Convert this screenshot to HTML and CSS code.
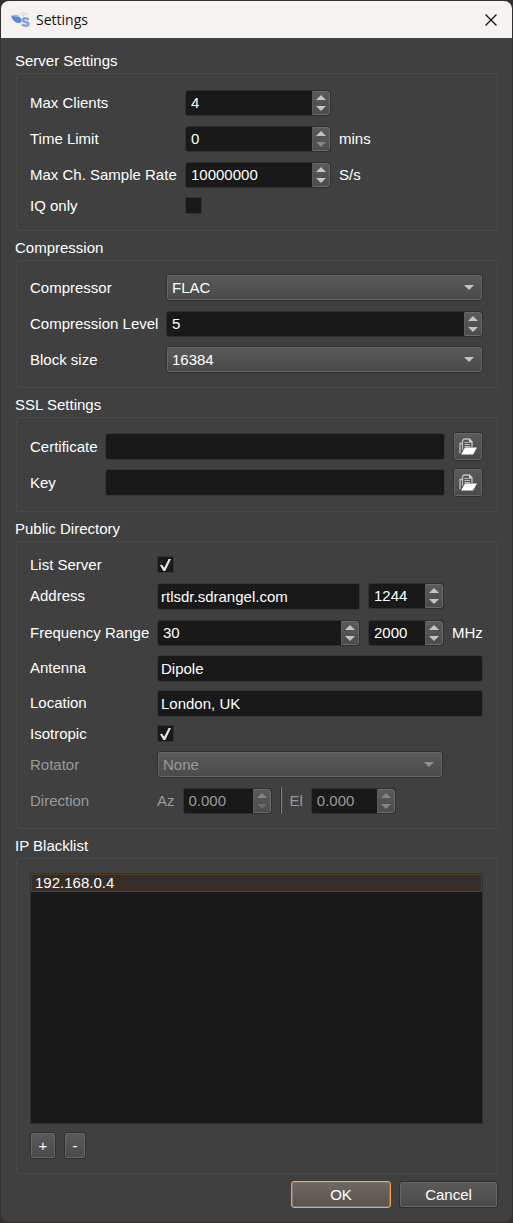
FILE: index.html
```html
<!DOCTYPE html>
<html lang="en">
<head>
<meta charset="utf-8">
<meta name="viewport" content="width=device-width, initial-scale=1">
<title>Settings</title>
<link rel="stylesheet" href="styles.css">
</head>
<body>
<main class="dialog">
  <header class="titlebar">
    <svg class="titlebar__logo" viewBox="0 0 22 18" aria-hidden="true">
      <path d="M1 5.500Q4 3.500 8 4.500L11.500 8V11Q9 12.500 6 11.500Q2.500 9.500 1 5.500Z" fill="#5b88d0"/>
      <path d="M1 5Q4 3 8 4L10 6.500Q5 5 1 5Z" fill="#9dbbe6"/>
      <path d="M9.500 4Q10 2 14 2.200Q18 2.500 17.500 4.500M11 5Q12.500 3.500 15 4.500" fill="none" stroke="#c9d6ea" stroke-width="1"/>
      <path d="M18.700 8.500Q17 7.200 15.200 7.200Q13 7.200 13 8.900Q13 10.400 15.700 10.900Q18.500 11.400 18.500 13Q18.500 14.800 15.700 14.800Q13.500 14.800 12 13.600" fill="none" stroke="#7da2dc" stroke-width="2.500"/>
    </svg>
    <h1 class="titlebar__text">Settings</h1>
    <button class="titlebar__close" type="button" aria-label="Close">
      <svg viewBox="0 0 12 12" aria-hidden="true"><path d="M0.500 0.500L11.500 11.500M11.500 0.500L0.500 11.500" stroke="#111" stroke-width="1.300"/></svg>
    </button>
  </header>

  <form class="content">
    <section class="group">
      <h2 class="group__title">Server Settings</h2>
      <div class="group__box group__box--roomy grid grid--server">
        <label for="clients">Max Clients</label>
        <div class="spin">
          <input id="clients" type="text" value="4">
          <span class="spin__steps"><button class="step step--up" type="button" aria-label="More clients"></button><button class="step step--down" type="button" aria-label="Fewer clients"></button></span>
        </div>
        <span></span>
        <label for="limit">Time Limit</label>
        <div class="spin">
          <input id="limit" type="text" value="0">
          <span class="spin__steps"><button class="step step--up" type="button" aria-label="Raise limit"></button><button class="step step--down" type="button" aria-label="Lower limit" disabled></button></span>
        </div>
        <span>mins</span>
        <label for="rate">Max Ch. Sample Rate</label>
        <div class="spin">
          <input id="rate" type="text" value="10000000">
          <span class="spin__steps"><button class="step step--up" type="button" aria-label="Raise rate"></button><button class="step step--down" type="button" aria-label="Lower rate"></button></span>
        </div>
        <span>S/s</span>
        <label for="iq">IQ only</label>
        <input class="check" id="iq" type="checkbox">
      </div>
    </section>

    <section class="group">
      <h2 class="group__title">Compression</h2>
      <div class="group__box group__box--snug grid grid--compression">
        <label for="compressor">Compressor</label>
        <div class="combo"><select id="compressor"><option>FLAC</option></select></div>
        <label for="level">Compression Level</label>
        <div class="spin">
          <input id="level" type="text" value="5">
          <span class="spin__steps"><button class="step step--up" type="button" aria-label="Raise level"></button><button class="step step--down" type="button" aria-label="Lower level"></button></span>
        </div>
        <label for="block">Block size</label>
        <div class="combo"><select id="block"><option>16384</option></select></div>
      </div>
    </section>

    <section class="group">
      <h2 class="group__title">SSL Settings</h2>
      <div class="group__box grid grid--ssl">
        <label for="cert">Certificate</label>
        <input class="text" id="cert" type="text">
        <button class="button button--icon" type="button" aria-label="Browse for certificate">
          <svg viewBox="0 0 18 18" aria-hidden="true"><path d="M1 15V5.500H3.500V2.500L5 1H10.500L13 3.500V9" fill="none" stroke="#bdbdbd" stroke-width="1.400"/><path d="M3.500 5V12M5.500 4.500H9.500M5.500 6.500H11M5.500 8.500H11" fill="none" stroke="#bdbdbd" stroke-width="1.200"/><path d="M10 1L13.500 4.500H10Z" fill="#e0e0e0"/><path d="M6 9.500H18L14 16.500H2Z" fill="#fff"/></svg>
        </button>
        <label for="key">Key</label>
        <input class="text" id="key" type="text">
        <button class="button button--icon" type="button" aria-label="Browse for key">
          <svg viewBox="0 0 18 18" aria-hidden="true"><path d="M1 15V5.500H3.500V2.500L5 1H10.500L13 3.500V9" fill="none" stroke="#bdbdbd" stroke-width="1.400"/><path d="M3.500 5V12M5.500 4.500H9.500M5.500 6.500H11M5.500 8.500H11" fill="none" stroke="#bdbdbd" stroke-width="1.200"/><path d="M10 1L13.500 4.500H10Z" fill="#e0e0e0"/><path d="M6 9.500H18L14 16.500H2Z" fill="#fff"/></svg>
        </button>
      </div>
    </section>

    <section class="group">
      <h2 class="group__title">Public Directory</h2>
      <div class="group__box grid grid--directory">
        <label for="list">List Server</label>
        <input class="check" id="list" type="checkbox" checked>
        <label for="address">Address</label>
        <div class="pair">
          <input class="text" id="address" type="text" value="rtlsdr.sdrangel.com">
          <div class="spin">
            <input type="text" value="1244" aria-label="Port">
            <span class="spin__steps"><button class="step step--up" type="button" aria-label="Raise port"></button><button class="step step--down" type="button" aria-label="Lower port"></button></span>
          </div>
        </div>
        <label for="freq">Frequency Range</label>
        <div class="pair">
          <div class="spin">
            <input id="freq" type="text" value="30">
            <span class="spin__steps"><button class="step step--up" type="button" aria-label="Raise minimum"></button><button class="step step--down" type="button" aria-label="Lower minimum"></button></span>
          </div>
          <div class="spin">
            <input type="text" value="2000" aria-label="Maximum frequency">
            <span class="spin__steps"><button class="step step--up" type="button" aria-label="Raise maximum"></button><button class="step step--down" type="button" aria-label="Lower maximum"></button></span>
          </div>
          <span>MHz</span>
        </div>
        <label for="antenna">Antenna</label>
        <input class="text" id="antenna" type="text" value="Dipole">
        <label for="location">Location</label>
        <input class="text" id="location" type="text" value="London, UK">
        <label for="iso">Isotropic</label>
        <input class="check" id="iso" type="checkbox" checked>
        <label class="is-off" for="rotator">Rotator</label>
        <div class="combo combo--rotator is-off"><select id="rotator" disabled><option>None</option></select></div>
        <span class="is-off">Direction</span>
        <div class="direction is-off">
          <label for="az">Az</label>
          <div class="spin spin--az">
            <input id="az" type="text" value="0.000" disabled>
            <span class="spin__steps"><button class="step step--up" type="button" aria-label="Raise azimuth" disabled></button><button class="step step--down step--min" type="button" aria-label="Lower azimuth" disabled></button></span>
          </div>
          <span class="direction__line"></span>
          <label for="el">El</label>
          <div class="spin spin--el">
            <input id="el" type="text" value="0.000" disabled>
            <span class="spin__steps"><button class="step step--up" type="button" aria-label="Raise elevation" disabled></button><button class="step step--down" type="button" aria-label="Lower elevation" disabled></button></span>
          </div>
        </div>
      </div>
    </section>

    <section class="group">
      <h2 class="group__title">IP Blacklist</h2>
      <div class="group__box">
        <ul class="list">
          <li class="list__item">192.168.0.4</li>
        </ul>
        <div class="list-actions">
          <button class="button button--add" type="button">+</button>
          <button class="button button--remove" type="button">-</button>
        </div>
      </div>
    </section>

    <footer class="actions">
      <button class="button button--default" type="button">OK</button>
      <button class="button" type="button">Cancel</button>
    </footer>
  </form>
</main>
</body>
</html>
```

FILE: styles.css
```css
* {
  box-sizing: border-box;
}

body {
  margin: 0;
  padding: 1px;
  background: #34302e;
  color: #fff;
  font: 15px/18px "Liberation Sans", Arial, sans-serif;
}

input,
select,
button {
  margin: 0;
  padding: 0;
  border: 0;
  background: none;
  color: inherit;
  font: inherit;
}

label {
  white-space: nowrap;
}

.dialog {
  overflow: hidden;
  border-radius: 8px;
  background: #404040;
}

.titlebar {
  display: flex;
  align-items: center;
  height: 37px;
  padding: 0 15px 0 9px;
  background: #f6f2f0;
  color: #111;
}

.titlebar__logo {
  width: 22px;
  height: 18px;
}

.titlebar__text {
  flex: 1;
  margin: 0 0 0 4px;
  font: 14px/20px "Open Sans", "Noto Sans", sans-serif;
}

.titlebar__close {
  display: flex;
  width: 12px;
  height: 12px;
}

.titlebar__close svg {
  width: 12px;
  height: 12px;
}

.content {
  padding: 6px 14px 14px;
}

.group__title {
  margin: 0;
  padding: 8px 0 3px;
  font-size: 15px;
  font-weight: 400;
  line-height: 18px;
}

.group__box {
  margin-left: 1px;
  padding: 14px 14px 14px 13px;
  border: 1px solid #4a4a4a;
  border-radius: 3px;
}

.group__box--roomy {
  padding-top: 15px;
  padding-bottom: 16px;
}

.group__box--snug {
  padding-top: 13px;
}

.grid {
  display: grid;
  align-items: center;
  gap: 9px 8px;
}

.grid--server {
  grid-template-columns: 147px 146px 1fr;
  grid-template-rows: repeat(3, 27px) 17px;
}

.grid--compression {
  grid-template-columns: 128px 1fr;
  grid-auto-rows: 27px;
}

.grid--ssl {
  grid-template-columns: 67px 1fr 30px;
  grid-auto-rows: 29px;
  row-gap: 7px;
}

.grid--directory {
  grid-template-columns: 119px 1fr;
  grid-template-rows: 17px 28px 27px 26px 26px 17px 27px 27px;
}

.text {
  width: 100%;
  min-width: 0;
  height: 27px;
  padding: 0 3px;
  border: 1px solid #363636;
  border-radius: 3px;
  background: #191919;
}

.spin {
  display: flex;
  height: 26px;
  min-width: 0;
  overflow: hidden;
  border: 1px solid #303030;
  border-radius: 3px;
  background: #191919;
}

.spin input {
  flex: 1;
  width: 0;
  min-width: 0;
  padding-left: 5px;
}

.spin__steps {
  display: flex;
  flex-direction: column;
  width: 18px;
  border: 1px solid #6a6a6a;
  border-left-color: #5c5c5c;
  border-radius: 0 2px 2px 0;
  background: linear-gradient(#5a5a5a, #4c4c4c);
}

.step {
  display: flex;
  flex: 1;
  align-items: center;
  justify-content: center;
  color: #c4c4c4;
}

.step::before {
  content: "";
  border: 5px solid transparent;
}

.step--up::before {
  border-top: 0;
  border-bottom-color: currentColor;
}

.step--down::before {
  border-bottom: 0;
  border-top-color: currentColor;
}

.step:disabled {
  color: #858585;
}

.step--min:disabled {
  color: #696969;
}

.combo {
  position: relative;
  height: 27px;
}

.combo select {
  width: 100%;
  height: 27px;
  padding: 0 24px 0 5px;
  border: 1px solid #303030;
  border-radius: 3px;
  background: linear-gradient(#5a5a5a, #4a4a4a);
  box-shadow: inset 0 0 0 1px #666;
  appearance: none;
  opacity: 1;
}

.combo::after {
  content: "";
  position: absolute;
  top: 11px;
  right: 9px;
  border: 5px solid transparent;
  border-top-color: #c4c4c4;
  border-bottom: 0;
  pointer-events: none;
}

.combo.is-off::after {
  border-top-color: #909090;
}

.combo--rotator {
  margin-right: 40px;
}

.is-off {
  color: #9a9a9a;
}

.check {
  display: block;
  width: 17px;
  height: 17px;
  border: 1px solid #333;
  background: #191919;
  appearance: none;
}

.check:checked::before {
  content: "";
  display: block;
  width: 11px;
  height: 12px;
  margin: 2px;
  background: #e6e6e6;
  clip-path: polygon(0 52%, 17% 45%, 39% 72%, 78% 0, 100% 0, 48% 100%, 31% 100%);
}

.pair {
  display: grid;
  grid-template-columns: 1fr 76px 31px;
  align-items: center;
  gap: 8px;
}

.direction {
  display: flex;
  align-items: center;
  gap: 8px;
}

.spin--az {
  width: 89px;
}

.spin--el {
  width: 85px;
}

.direction__line {
  width: 2px;
  height: 27px;
  border-left: 1px solid #2b2b2b;
  background: #888;
}

.button {
  height: 27px;
  border: 1px solid #303030;
  border-radius: 3px;
  background: linear-gradient(#5a5a5a, #4a4a4a);
  box-shadow: inset 0 0 0 1px #666;
}

.button--icon {
  display: flex;
  align-items: center;
  justify-content: center;
  height: 29px;
}

.button--icon svg {
  width: 18px;
  height: 18px;
}

.list {
  height: 251px;
  margin: 0;
  padding: 0;
  border: 1px solid #303030;
  background: #191919;
  list-style: none;
}

.list__item {
  padding: 0 3px;
  border: 1px solid #553c20;
  background: linear-gradient(#2f2d2b, #3a2e25);
  line-height: 16px;
}

.list-actions {
  display: flex;
  gap: 8px;
  margin-top: 8px;
}

.button--add {
  width: 26px;
}

.button--remove {
  width: 22px;
}

.actions {
  display: grid;
  grid-template-columns: 100px 99px;
  justify-content: end;
  gap: 8px;
  padding-top: 7px;
}

.button--default {
  border-color: #ffa040;
  background: linear-gradient(#6f6861, #59544f);
  box-shadow: inset 0 0 0 1px #807468;
}
```
